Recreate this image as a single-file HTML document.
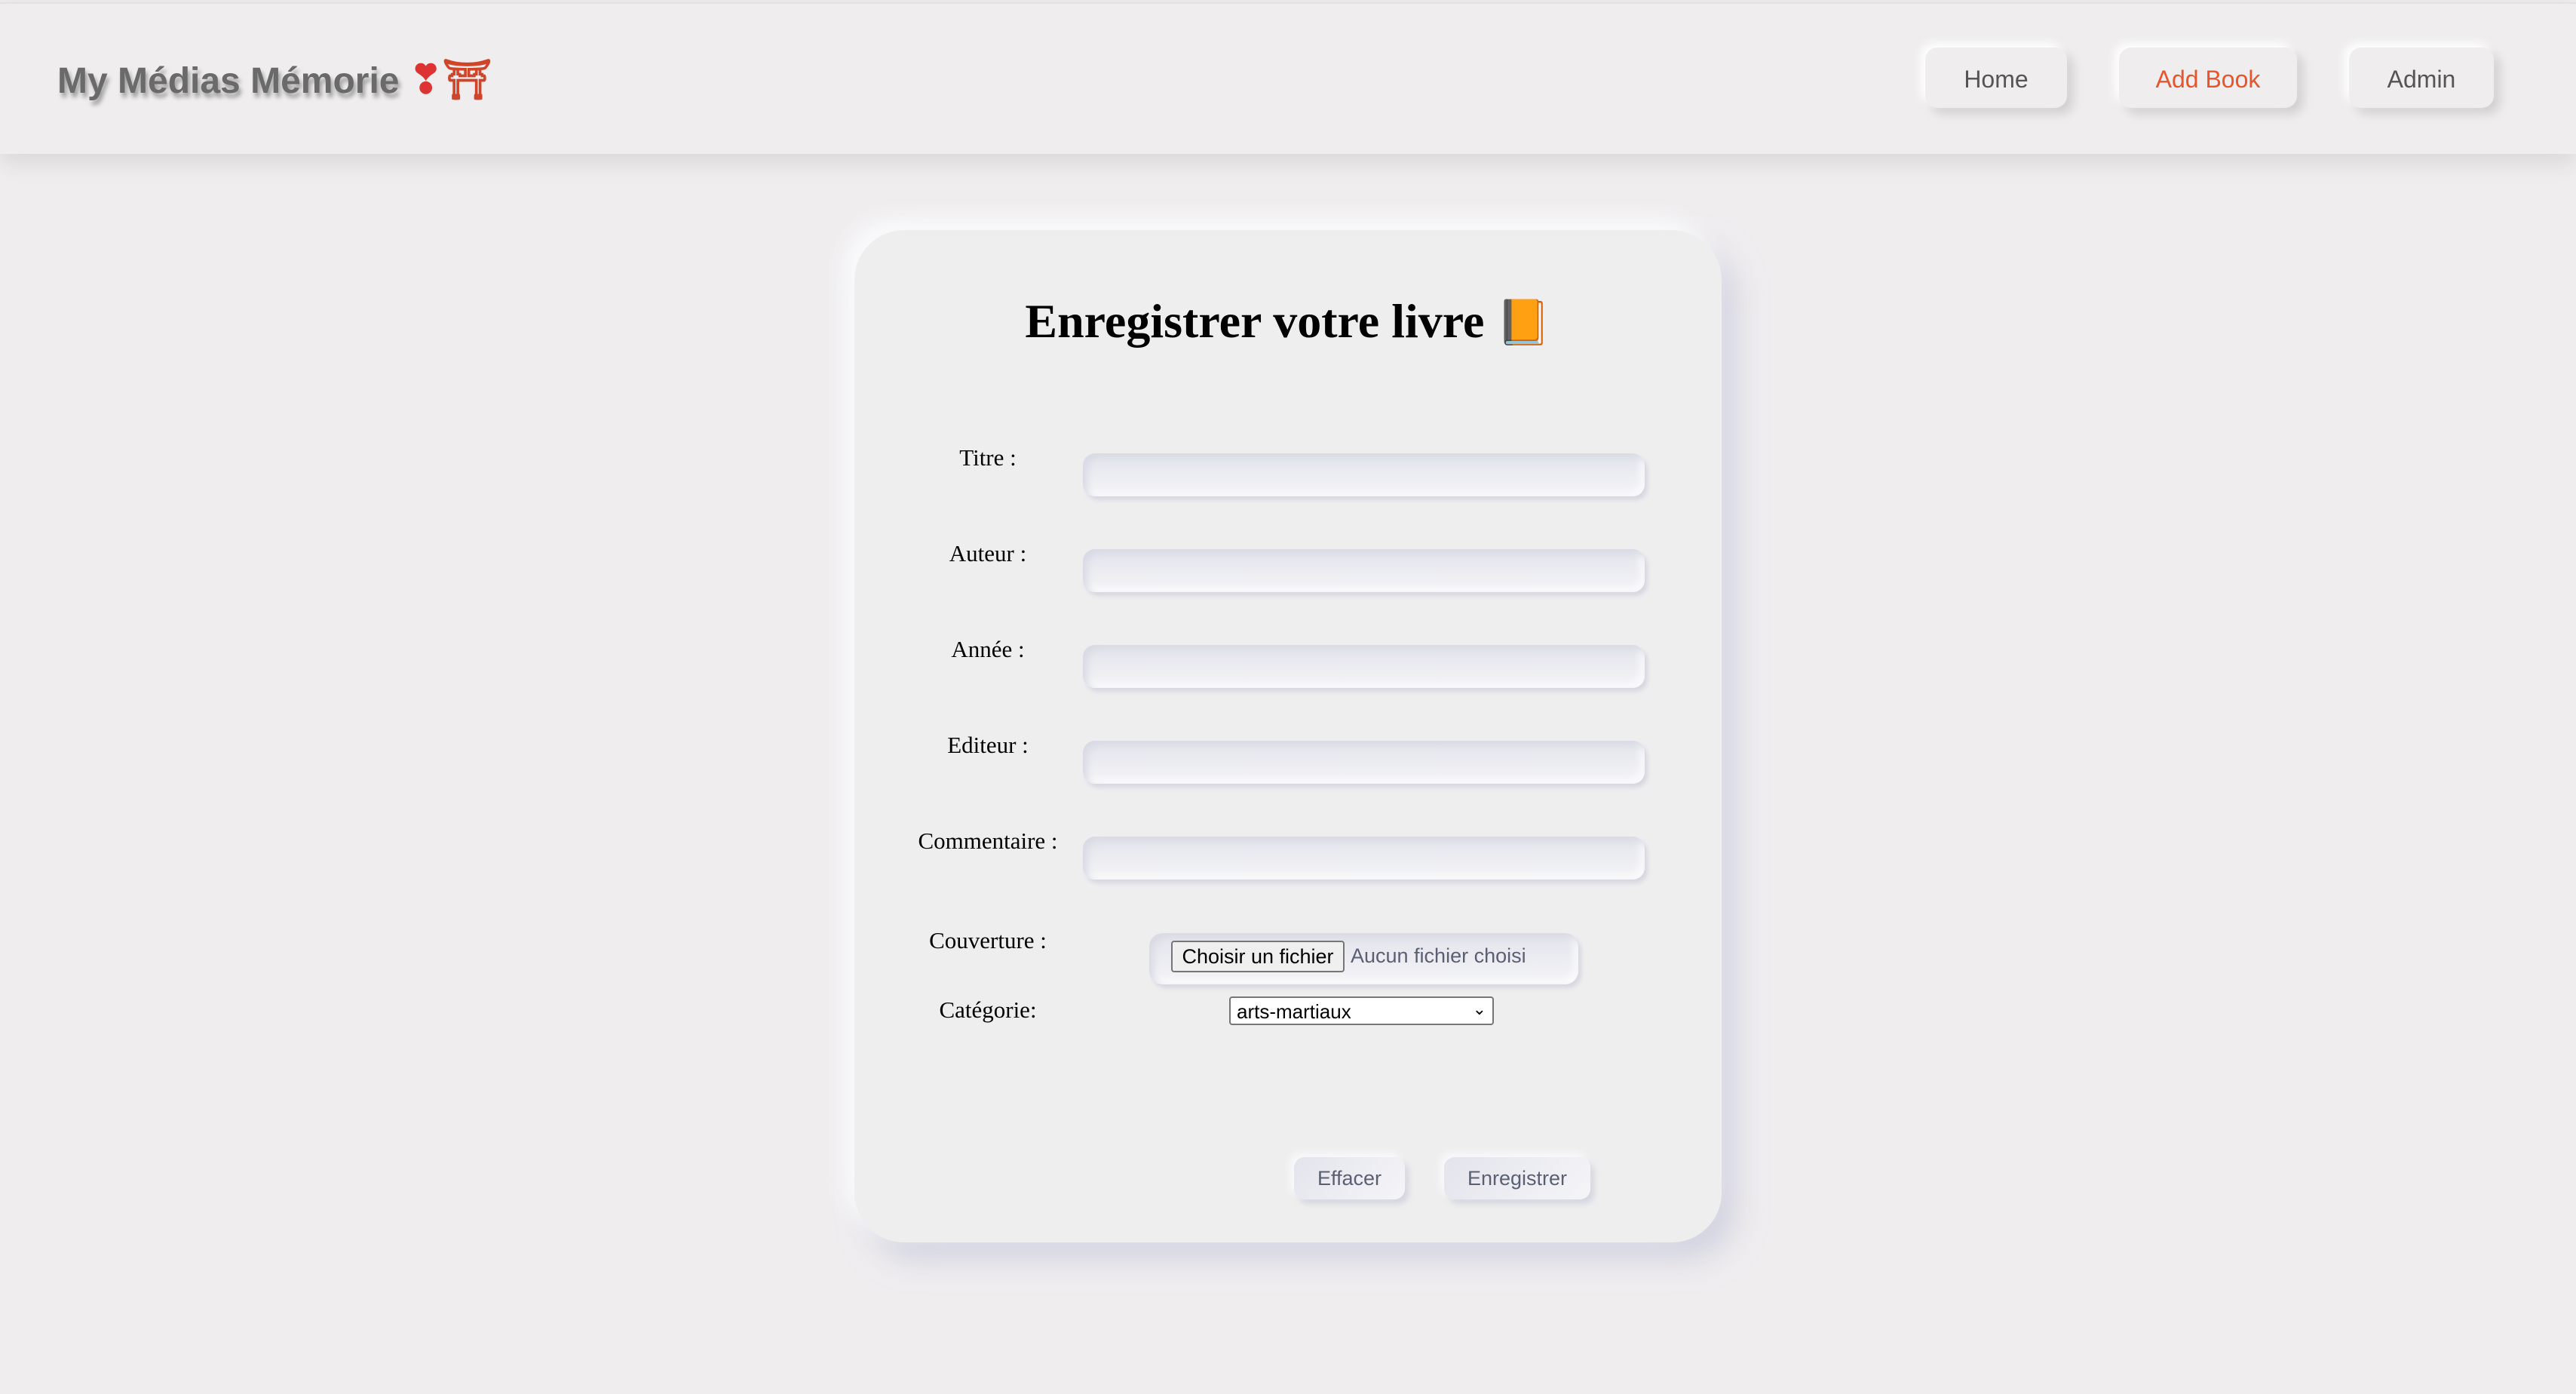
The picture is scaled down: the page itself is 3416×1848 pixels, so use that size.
<!DOCTYPE html>
<html><head><meta charset="utf-8"><style>
*{box-sizing:border-box;margin:0;padding:0}
body{width:3416px;height:1848px;background:#efedee;position:relative;overflow:hidden;font-family:"Liberation Serif",serif}
.hdr{position:absolute;left:0;top:3px;width:3416px;height:201px;background:#efedee;border-top:2px solid #e2e2e2;box-shadow:0 10px 30px rgba(0,0,0,0.10)}
.logo{position:absolute;left:76px;top:70px;font:bold 48px "Liberation Sans",sans-serif;color:#6a6a6a;text-shadow:3px 6px 6px rgba(0,0,0,0.35);white-space:nowrap}
.nav{position:absolute;top:63px;height:80px;border-radius:16px;background:#efedee;box-shadow:-6px -6px 12px #fff,8px 8px 14px rgba(0,0,0,0.13);font:32px "Liberation Sans",sans-serif;color:#555;display:flex;align-items:center;justify-content:center;padding-top:4px}
.card{position:absolute;left:1133px;top:305px;width:1150px;height:1342px;border-radius:66px;background:#efeeef;box-shadow:-14px -14px 30px #fbfbfd,18px 22px 40px rgba(190,192,215,0.6)}
.t{position:absolute;left:0;width:100%;text-align:center;top:389px;font:bold 64px "Liberation Serif",serif;color:#000}
.lbl{position:absolute;width:300px;left:1160px;text-align:center;font-size:31px;color:#000}
.in{position:absolute;left:1436px;width:745px;height:57px;border-radius:16px;background:linear-gradient(#e3e4ec,#f4f4f7);box-shadow:inset 6px 6px 10px #d9dae4,inset -6px -6px 10px #fafafc,4px 5px 6px rgba(200,200,215,0.6)}
.btn{position:absolute;top:1534px;height:56px;border-radius:14px;background:linear-gradient(135deg,#e3e4ec,#f5f5f8);box-shadow:-5px -5px 10px #fafafc,5px 6px 8px rgba(190,192,210,0.55);font:27px "Liberation Sans",sans-serif;color:#5a5f72;display:flex;align-items:center;justify-content:center}
</style></head><body>
<div class="hdr">
<div class="logo">My Médias Mémorie <span style="color:#d33;text-shadow:none;font-size:52px">❣</span><span style="color:#d0452a;text-shadow:none;font-size:52px">⛩</span></div>
</div>
<div class="nav" style="left:2553px;width:188px">Home</div>
<div class="nav" style="left:2810px;width:236px;color:#e8542c">Add Book</div>
<div class="nav" style="left:3115px;width:192px">Admin</div>
<div class="card"></div>
<div class="t">Enregistrer votre livre <span style="font-size:58px">📙</span></div>
<div class="lbl" style="top:589px">Titre :</div>
<div class="lbl" style="top:716px">Auteur :</div>
<div class="lbl" style="top:843px">Année :</div>
<div class="lbl" style="top:970px">Editeur :</div>
<div class="lbl" style="top:1097px">Commentaire :</div>
<div class="in" style="top:601px"></div>
<div class="in" style="top:728px"></div>
<div class="in" style="top:855px"></div>
<div class="in" style="top:982px"></div>
<div class="in" style="top:1109px"></div>
<div class="lbl" style="top:1229px">Couverture :</div>
<div class="in" style="left:1524px;top:1237px;width:569px;height:68px;border-radius:18px"></div>
<div style="position:absolute;left:1553px;top:1247px;width:230px;height:42px;border:2px solid #767676;border-radius:4px;background:#efefef;font:27px 'Liberation Sans',sans-serif;color:#000;display:flex;align-items:center;justify-content:center">Choisir un fichier</div>
<div style="position:absolute;left:1791px;top:1252px;font:27px 'Liberation Sans',sans-serif;color:#5a5f72">Aucun fichier choisi</div>
<div class="lbl" style="top:1321px">Catégorie:</div>
<div style="position:absolute;left:1630px;top:1321px;width:351px;height:38px;border:2px solid #767676;border-radius:4px;background:#fff;font:26px 'Liberation Sans',sans-serif;color:#000;padding:3px 8px">arts-martiaux<span style="position:absolute;right:8px;top:2px;font-size:22px">⌄</span></div>
<div class="btn" style="left:1716px;width:147px">Effacer</div>
<div class="btn" style="left:1915px;width:194px">Enregistrer</div>
</body></html>
